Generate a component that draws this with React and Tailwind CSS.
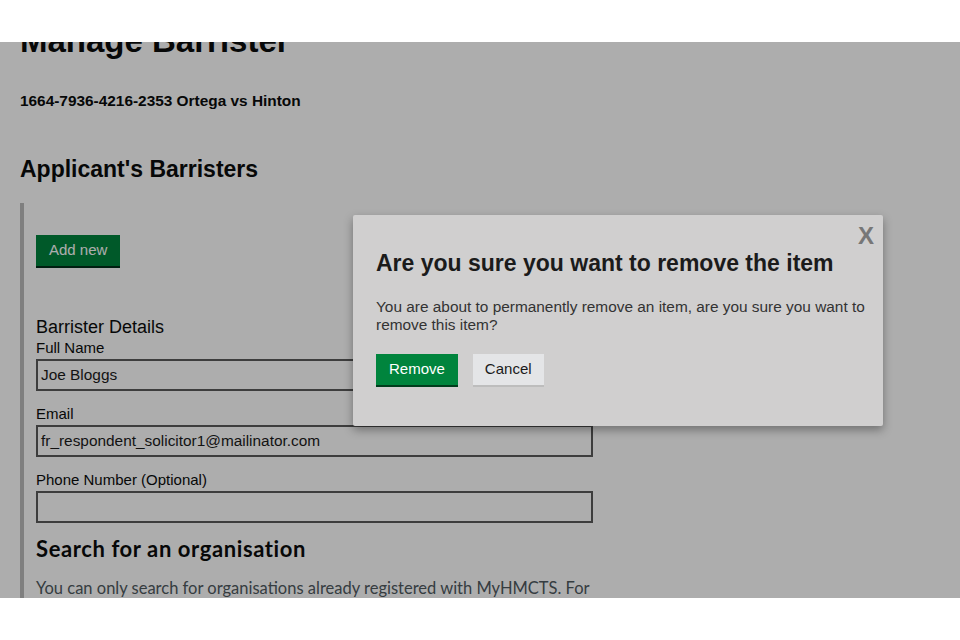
import React from "react";

const sans = { fontFamily: '"Liberation Sans", Arial, sans-serif' };
const gds = { fontFamily: 'Lato, "Noto Sans", sans-serif' };

function Field({ label, value }) {
  return (
    <div>
      <label className="block text-[15px] leading-[18px] text-[#0b0c0c]">{label}</label>
      <div className="mt-[2px] w-[557px] h-[32px] border-2 border-[#5a5a5a] bg-white flex items-center px-[3px] text-[15.4px] text-[#1b1b1b]">
        {value}
      </div>
    </div>
  );
}

export default function App() {
  return (
    <div className="w-[960px] h-[640px] bg-white flex flex-col" style={sans}>
      <div className="h-[42px] bg-white shrink-0"></div>

      <div className="relative h-[556px] overflow-hidden bg-white shrink-0">
        <div className="pl-[20px] text-[#0b0c0c]">
          <h1 className="mt-[-20px] text-[33px] leading-[38px] font-bold">Manage Barrister</h1>
          <p className="mt-[32px] text-[15.4px] leading-[17px] font-bold">1664-7936-4216-2353 Ortega vs Hinton</p>
          <h2 className="mt-[47px] text-[23px] leading-[26px] font-bold">Applicant's Barristers</h2>

          <div className="mt-[21px] border-l-[4px] border-[#bcbcbc] pl-[12px] pt-[32px]">
            <button className="bg-[#00843d] text-white text-[15px] h-[33px] px-[13px] border-b-2 border-[#002d18]">
              Add new
            </button>

            <div className="mt-[49px] text-[18px] leading-[20px]">Barrister Details</div>
            <div className="mt-[2px] flex flex-col gap-[14px]">
              <Field label="Full Name" value="Joe Bloggs" />
              <Field label="Email" value="fr_respondent_solicitor1@mailinator.com" />
              <Field label="Phone Number (Optional)" value="" />
            </div>

            <h3 className="mt-[13px] text-[22px] leading-[26px] font-bold tracking-[0.6px]" style={gds}>
              Search for an organisation
            </h3>
            <p className="mt-[16px] text-[16.5px] leading-[20px] text-[#505a5f]" style={gds}>
              You can only search for organisations already registered with MyHMCTS. For
            </p>
          </div>
        </div>

        <div className="absolute inset-0 bg-[rgba(0,0,0,0.32)]"></div>

        <div className="absolute left-[353px] top-[173px] w-[530px] h-[211px] bg-[#d0cfcf] rounded-[2px] shadow-[0_4px_10px_rgba(0,0,0,0.35)] pl-[23px] pr-[12px] pt-[35px]">
          <span className="absolute right-[9px] top-[3px] text-[24px] font-bold text-[#777777]">X</span>
          <h2 className="text-[23px] leading-[26px] font-bold text-[#1b1b1b]">
            Are you sure you want to remove the item
          </h2>
          <p className="mt-[22px] text-[15.4px] leading-[18px] text-[#333333]">
            You are about to permanently remove an item, are you sure you want to remove this item?
          </p>
          <div className="mt-[20px] flex gap-[15px]">
            <button className="h-[33px] px-[13px] bg-[#00843d] text-white text-[15px] border-b-2 border-[#003d1c]">
              Remove
            </button>
            <button className="h-[33px] px-[12px] bg-[#e4e5e7] text-[#1b1b1b] text-[15px] border-b-2 border-[#bdbdbd]">
              Cancel
            </button>
          </div>
        </div>
      </div>

      <div className="flex-1 bg-white"></div>
    </div>
  );
}
